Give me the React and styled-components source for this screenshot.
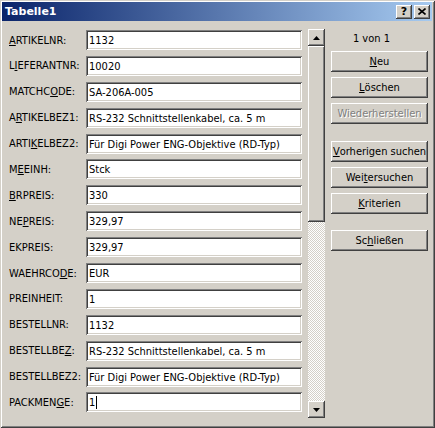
import React from 'react';
import styled, { css, createGlobalStyle } from 'styled-components';

const GlobalStyle = createGlobalStyle`
  html, body {
    margin: 0;
    padding: 0;
    background: #d4d0c8;
  }
`;

// classic 3D borders
const raised = css`
  box-shadow: inset -1px -1px #404040, inset 1px 1px #fff,
    inset -2px -2px #808080, inset 2px 2px #d4d0c8;
`;

const sunken = css`
  box-shadow: inset 1px 1px #808080, inset -1px -1px #fff,
    inset 2px 2px #404040, inset -2px -2px #d4d0c8;
`;

const Window = styled.div`
  box-sizing: border-box;
  width: 435px;
  height: 428px;
  display: flex;
  flex-direction: column;
  padding: 2px 3px 3px 2px;
  background: #d4d0c8;
  box-shadow: inset 1px 1px #d4d0c8, inset -1px -1px #404040,
    inset 2px 2px #fff, inset -2px -2px #808080;
  font-family: "DejaVu Sans Condensed", "Liberation Sans", Tahoma, sans-serif;
  font-size: 11px;
  color: #000;
`;

const TitleBar = styled.div`
  height: 19px;
  display: flex;
  align-items: center;
  padding: 0 2px 0 3px;
  background: linear-gradient(to right, #0a246a, #a6caf0);
`;

const Title = styled.span`
  flex: 1;
  color: #fff;
  font-family: "DejaVu Sans", Tahoma, sans-serif;
  font-weight: bold;
  font-size: 11px;
`;

const CaptionButton = styled.div`
  width: 16px;
  height: 14px;
  margin-left: ${props => props.gap || 0}px;
  display: flex;
  align-items: center;
  justify-content: center;
  background: #d4d0c8;
  font-family: "DejaVu Sans", sans-serif;
  font-weight: bold;
  font-size: 11px;
  line-height: 1;
  ${raised}
`;

const Body = styled.div`
  flex: 1;
  display: flex;
  align-items: flex-start;
  padding: 9px 0 0 7px;
`;

const FieldGrid = styled.div`
  display: grid;
  grid-template-columns: 77px 216px;
  row-gap: 5.9px;
  align-items: center;
`;

const Label = styled.label`
  white-space: nowrap;
`;

const Key = styled.span`
  text-decoration: underline;
  text-underline-offset: 1px;
`;

const Field = styled.div`
  box-sizing: border-box;
  height: 20px;
  display: flex;
  align-items: center;
  padding: 1px 3px 0;
  background: #fff;
  white-space: nowrap;
  overflow: hidden;
  ${sunken}
`;

const Caret = styled.span`
  display: inline-block;
  width: 1px;
  height: 13px;
  margin-left: 1px;
  background: #000;
`;

const Scrollbar = styled.div`
  width: 17px;
  height: 389px;
  margin: -1px 0 0 6px;
  display: flex;
  flex-direction: column;
  background: repeating-conic-gradient(#d4d0c8 0 25%, #fff 0 50%) 0 0 / 2px 2px;
`;

const ScrollButton = styled.div`
  height: 17px;
  display: flex;
  align-items: center;
  justify-content: center;
  background: #d4d0c8;
  ${raised}
`;

const Thumb = styled.div`
  height: 176px;
  background: #d4d0c8;
  ${raised}
`;

const Track = styled.div`
  flex: 1;
`;

const Side = styled.div`
  width: 97px;
  margin-left: 6px;
  display: flex;
  flex-direction: column;
`;

const Counter = styled.div`
  box-sizing: border-box;
  height: 21px;
  text-align: right;
  padding: 2px 38px 0 0;
`;

const Group = styled.div`
  display: flex;
  flex-direction: column;
  gap: 5px;
  margin-top: ${props => props.space}px;
`;

const Button = styled.div`
  height: 21px;
  display: flex;
  align-items: center;
  justify-content: center;
  background: #d4d0c8;
  white-space: nowrap;
  color: ${props => (props.disabled ? '#808080' : '#000')};
  text-shadow: ${props => (props.disabled ? '1px 1px #fff' : 'none')};
  ${raised}
`;

const fields = [
  ['ARTIKELNR', 0, '1132'],
  ['LIEFERANTNR', 1, '10020'],
  ['MATCHCODE', 6, 'SA-206A-005'],
  ['ARTIKELBEZ1', 1, 'RS-232 Schnittstellenkabel, ca. 5 m'],
  ['ARTIKELBEZ2', 4, 'Für Digi Power ENG-Objektive (RD-Typ)'],
  ['MEEINH', 1, 'Stck'],
  ['BRPREIS', 0, '330'],
  ['NEPREIS', 2, '329,97'],
  ['EKPREIS', -1, '329,97'],
  ['WAEHRCODE', 7, 'EUR'],
  ['PREINHEIT', -1, '1'],
  ['BESTELLNR', -1, '1132'],
  ['BESTELLBEZ', 9, 'RS-232 Schnittstellenkabel, ca. 5 m'],
  ['BESTELLBEZ2', -1, 'Für Digi Power ENG-Objektive (RD-Typ)'],
  ['PACKMENGE', 7, '1', true],
];

const groups = [
  { space: 0, items: [['Neu', 0], ['Löschen', 0], ['Wiederherstellen', -1, true]] },
  { space: 17, items: [['Vorherigen suchen', 0], ['Weitersuchen', 3], ['Kriterien', 0]] },
  { space: 16, items: [['Schließen', 2]] },
];

const Hotkey = ({ text, index }) => {
  if (index < 0) return text;
  return (
    <>
      {text.slice(0, index)}
      <Key>{text[index]}</Key>
      {text.slice(index + 1)}
    </>
  );
};

const Arrow = ({ down }) => (
  <svg width="7" height="4" viewBox="0 0 7 4">
    <polygon points={down ? '0,0 7,0 3.5,4' : '0,4 7,4 3.5,0'} fill="#000" />
  </svg>
);

const App = () => (
  <>
    <GlobalStyle />
    <Window>
      <TitleBar>
        <Title>Tabelle1</Title>
        <CaptionButton>?</CaptionButton>
        <CaptionButton gap={2}>
          <svg width="8" height="7" viewBox="0 0 8 7">
            <path d="M0.5 0.5 L7.5 6.5 M7.5 0.5 L0.5 6.5" stroke="#000" strokeWidth="1.6" />
          </svg>
        </CaptionButton>
      </TitleBar>

      <Body>
        <FieldGrid>
          {fields.map(([name, key, value, focused]) => (
            <React.Fragment key={name}>
              <Label>
                <Hotkey text={name} index={key} />:
              </Label>
              <Field>
                {value}
                {focused && <Caret />}
              </Field>
            </React.Fragment>
          ))}
        </FieldGrid>

        <Scrollbar>
          <ScrollButton><Arrow /></ScrollButton>
          <Thumb />
          <Track />
          <ScrollButton><Arrow down /></ScrollButton>
        </Scrollbar>

        <Side>
          <Counter>1 von 1</Counter>
          {groups.map(group => (
            <Group key={group.items[0][0]} space={group.space}>
              {group.items.map(([label, key, disabled]) => (
                <Button key={label} disabled={disabled}>
                  <Hotkey text={label} index={key} />
                </Button>
              ))}
            </Group>
          ))}
        </Side>
      </Body>
    </Window>
  </>
);

export default App;
